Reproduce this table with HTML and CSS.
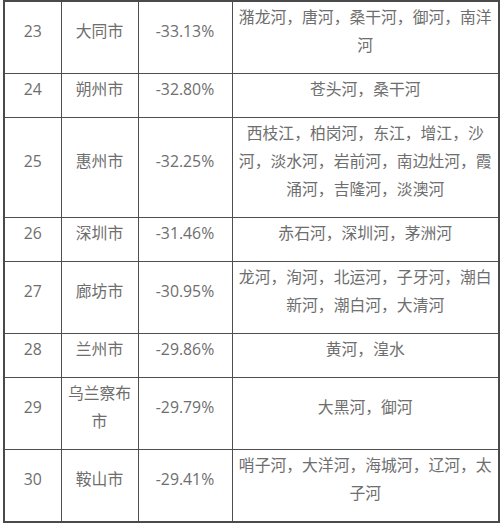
FILE: index.html
```html
<!DOCTYPE html>
<html lang="zh-CN">
<head>
<meta charset="utf-8">
<title>城市河流</title>
<link rel="stylesheet" href="styles.css">
</head>
<body>
<table class="rivers">
  <colgroup>
    <col class="c-rank">
    <col class="c-city">
    <col class="c-pct">
    <col class="c-river">
  </colgroup>
  <tbody>
    <tr><td>23</td><td>大同市</td><td>-33.13%</td><td>潴龙河，唐河，桑干河，御河，南洋河</td></tr>
    <tr><td>24</td><td>朔州市</td><td>-32.80%</td><td>苍头河，桑干河</td></tr>
    <tr><td>25</td><td>惠州市</td><td>-32.25%</td><td>西枝江，柏岗河，东江，增江，沙河，淡水河，岩前河，南边灶河，霞涌河，吉隆河，淡澳河</td></tr>
    <tr><td>26</td><td>深圳市</td><td>-31.46%</td><td>赤石河，深圳河，茅洲河</td></tr>
    <tr><td>27</td><td>廊坊市</td><td>-30.95%</td><td>龙河，洵河，北运河，子牙河，潮白新河，潮白河，大清河</td></tr>
    <tr><td>28</td><td>兰州市</td><td>-29.86%</td><td>黄河，湟水</td></tr>
    <tr><td>29</td><td>乌兰察布市</td><td>-29.79%</td><td>大黑河，御河</td></tr>
    <tr><td>30</td><td>鞍山市</td><td>-29.41%</td><td>哨子河，大洋河，海城河，辽河，太子河</td></tr>
  </tbody>
</table>
</body>
</html>
```

FILE: styles.css
```css
html, body {
  margin: 0;
  padding: 0;
  background: #ffffff;
}

body {
  padding: 0 0 0 3px;
}

.rivers {
  border-collapse: collapse;
  table-layout: fixed;
  width: 495px;
  font-family: "Open Sans", "Noto Sans CJK SC", sans-serif;
  font-size: 15.8px;
  line-height: 28px;
  color: #6e6e6e;
  border: 2px solid #4a4a4a;
}

.c-rank { width: 57px; }
.c-city { width: 77px; }
.c-pct { width: 94px; }
.c-river { width: 267px; }

.rivers td {
  border: 1px solid #4e4e4e;
  padding: 1px 4px 14px;
  text-align: center;
  vertical-align: middle;
  word-break: normal;
}
```
